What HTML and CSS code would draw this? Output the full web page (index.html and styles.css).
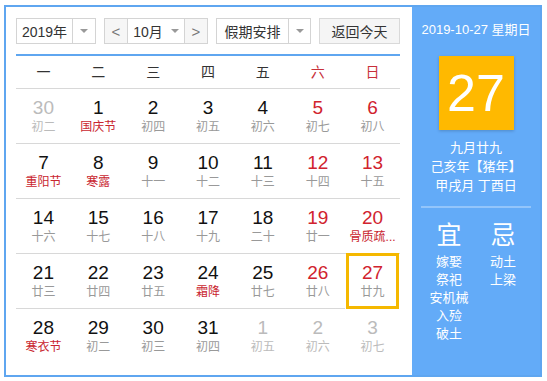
FILE: index.html
```html
<!DOCTYPE html>
<html lang="zh-CN">
<head>
  <meta charset="UTF-8">
  <meta name="viewport" content="width=device-width, initial-scale=1.0">
  <title>万年历</title>
  <link rel="stylesheet" href="styles.css">
</head>
<body>
  <div class="calendar">
    <div class="main">
      <div class="bar">
        <div class="select year"><span class="val">2019年</span><span class="arrow"><i class="caret"></i></span></div>
        <div class="month">
          <span class="step">&lt;</span>
          <span class="mval">10月<i class="caret"></i></span>
          <span class="step">&gt;</span>
        </div>
        <div class="select holiday"><span class="val">假期安排</span><span class="arrow"><i class="caret"></i></span></div>
        <div class="today-btn">返回今天</div>
      </div>

      <div class="week">
        <span>一</span><span>二</span><span>三</span><span>四</span><span>五</span><span class="red">六</span><span class="red">日</span>
      </div>

      <div class="days">
        <div class="day other"><span class="num">30</span><span class="lunar">初二</span></div>
        <div class="day"><span class="num">1</span><span class="lunar fest">国庆节</span></div>
        <div class="day"><span class="num">2</span><span class="lunar">初四</span></div>
        <div class="day"><span class="num">3</span><span class="lunar">初五</span></div>
        <div class="day"><span class="num">4</span><span class="lunar">初六</span></div>
        <div class="day weekend"><span class="num">5</span><span class="lunar">初七</span></div>
        <div class="day weekend"><span class="num">6</span><span class="lunar">初八</span></div>

        <div class="day"><span class="num">7</span><span class="lunar fest">重阳节</span></div>
        <div class="day"><span class="num">8</span><span class="lunar fest">寒露</span></div>
        <div class="day"><span class="num">9</span><span class="lunar">十一</span></div>
        <div class="day"><span class="num">10</span><span class="lunar">十二</span></div>
        <div class="day"><span class="num">11</span><span class="lunar">十三</span></div>
        <div class="day weekend"><span class="num">12</span><span class="lunar">十四</span></div>
        <div class="day weekend"><span class="num">13</span><span class="lunar">十五</span></div>

        <div class="day"><span class="num">14</span><span class="lunar">十六</span></div>
        <div class="day"><span class="num">15</span><span class="lunar">十七</span></div>
        <div class="day"><span class="num">16</span><span class="lunar">十八</span></div>
        <div class="day"><span class="num">17</span><span class="lunar">十九</span></div>
        <div class="day"><span class="num">18</span><span class="lunar">二十</span></div>
        <div class="day weekend"><span class="num">19</span><span class="lunar">廿一</span></div>
        <div class="day weekend"><span class="num">20</span><span class="lunar fest">骨质疏...</span></div>

        <div class="day"><span class="num">21</span><span class="lunar">廿三</span></div>
        <div class="day"><span class="num">22</span><span class="lunar">廿四</span></div>
        <div class="day"><span class="num">23</span><span class="lunar">廿五</span></div>
        <div class="day"><span class="num">24</span><span class="lunar fest">霜降</span></div>
        <div class="day"><span class="num">25</span><span class="lunar">廿七</span></div>
        <div class="day weekend"><span class="num">26</span><span class="lunar">廿八</span></div>
        <div class="day weekend today"><span class="num">27</span><span class="lunar">廿九</span></div>

        <div class="day last"><span class="num">28</span><span class="lunar fest">寒衣节</span></div>
        <div class="day last"><span class="num">29</span><span class="lunar">初二</span></div>
        <div class="day last"><span class="num">30</span><span class="lunar">初三</span></div>
        <div class="day last"><span class="num">31</span><span class="lunar">初四</span></div>
        <div class="day last other"><span class="num">1</span><span class="lunar">初五</span></div>
        <div class="day last other"><span class="num">2</span><span class="lunar">初六</span></div>
        <div class="day last other"><span class="num">3</span><span class="lunar">初七</span></div>
      </div>
    </div>

    <div class="panel">
      <div class="date">2019-10-27 星期日</div>
      <div class="big">27</div>
      <div class="info">
        <p>九月廿九</p>
        <p>己亥年【猪年】</p>
        <p>甲戌月 丁酉日</p>
      </div>
      <div class="divider"></div>
      <div class="yiji">
        <div class="col">
          <div class="head">宜</div>
          <p>嫁娶</p>
          <p>祭祀</p>
          <p>安机械</p>
          <p>入殓</p>
          <p>破土</p>
        </div>
        <div class="col">
          <div class="head">忌</div>
          <p>动土</p>
          <p>上梁</p>
        </div>
      </div>
    </div>
  </div>
</body>
</html>
```

FILE: styles.css
```css
* {
  box-sizing: border-box;
}
body {
  margin: 0;
  background: #fff;
  font-family: "Liberation Sans", "Noto Sans CJK SC", sans-serif;
  color: #333;
}
p {
  margin: 0;
}

.calendar {
  display: flex;
  width: 538px;
  height: 372px;
  margin: 5px 0 0 4px;
  border: 2px solid #5fa6f0;
}

/* 左边日历区 */
.main {
  flex: 1;
  padding: 11px 12px 0 10px;
}
.bar {
  display: flex;
  justify-content: space-between;
  height: 26px;
  font-size: 14px;
}
.select {
  display: flex;
  border: 1px solid #d4d4d4;
  background: #fff;
}
.select .val {
  display: flex;
  align-items: center;
  justify-content: center;
  border-right: 1px solid #d4d4d4;
}
.select .arrow {
  display: flex;
  align-items: center;
  justify-content: center;
  flex: 1;
}
.year { width: 80px; }
.year .val { width: 56px; }
.holiday { width: 95px; }
.holiday .val { width: 72px; }
.caret {
  display: inline-block;
  width: 0;
  height: 0;
  border-left: 4px solid transparent;
  border-right: 4px solid transparent;
  border-top: 4px solid #999;
}
.month {
  display: flex;
  width: 104px;
  border: 1px solid #d4d4d4;
}
.step {
  display: flex;
  align-items: center;
  justify-content: center;
  width: 22px;
  background: #f6f6f6;
  color: #777;
  font-size: 15px;
}
.mval {
  display: flex;
  align-items: center;
  justify-content: center;
  gap: 8px;
  flex: 1;
  border-left: 1px solid #d4d4d4;
  border-right: 1px solid #d4d4d4;
}
.today-btn {
  display: flex;
  align-items: center;
  justify-content: center;
  width: 81px;
  border: 1px solid #d9d9d9;
  background: #f5f5f5;
}

.week {
  display: grid;
  grid-template-columns: repeat(7, 1fr);
  height: 35px;
  margin-top: 10px;
  border-top: 2px solid #5fa6f0;
  border-bottom: 1px solid #d8d8d8;
  font-size: 14px;
  line-height: 32px;
  text-align: center;
  color: #333;
}
.week .red {
  color: #c8303a;
}

.days {
  display: grid;
  grid-template-columns: repeat(7, 1fr);
  grid-auto-rows: 55px;
}
.day {
  display: flex;
  flex-direction: column;
  align-items: center;
  padding-top: 8px;
  border-bottom: 1px solid #d8d8d8;
}
.day.last {
  border-bottom: none;
}
.num {
  font-size: 19px;
  line-height: 22px;
  color: #111;
}
.lunar {
  white-space: nowrap;
  font-size: 12px;
  line-height: 16px;
  color: #999;
}
.weekend .num {
  color: #d1232e;
}
.lunar.fest {
  color: #c9262f;
}
.other .num,
.other .lunar {
  color: #bbb;
}
.today {
  margin: -1px 1px 0;
  padding-top: 9px;
  border: 3px solid #f5b800;
}
.today .num {
  margin-top: -3px;
}

/* 右边信息栏 */
.panel {
  width: 128px;
  padding-top: 13px;
  background: #63abf8;
  color: #fff;
  text-align: center;
}
.date {
  font-size: 13px;
  line-height: 20px;
}
.big {
  width: 75px;
  height: 74px;
  margin: 16px auto 0;
  background: #ffb900;
  box-shadow: 0 1px 3px rgba(0, 0, 0, 0.2);
  font-size: 52px;
  line-height: 74px;
}
.info {
  margin-top: 8px;
  font-size: 13px;
  line-height: 19px;
}
.divider {
  width: 110px;
  height: 2px;
  margin: 11px auto 0;
  background: #93c5fb;
}
.yiji {
  display: flex;
  justify-content: center;
  margin-top: 12px;
}
.col {
  width: 54px;
  font-size: 13px;
  line-height: 18px;
}
.col .head {
  margin-bottom: 3px;
  font-size: 25px;
  line-height: 30px;
}
```
